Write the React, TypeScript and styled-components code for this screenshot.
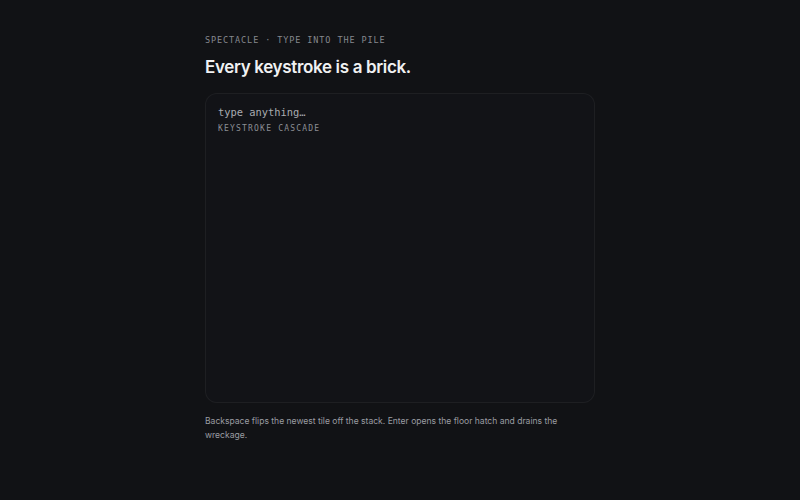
import React from "react";
import styled, { createGlobalStyle } from "styled-components";

const Global = createGlobalStyle`
  html, body { margin: 0; padding: 0; background: #111215; }
  body { font-family: Inter, "Noto Sans", sans-serif; color: #e8e9ea; }
`;

const Page = styled.main`
  width: 390px;
  margin: 0 auto;
  padding-top: 34px;
  display: flex;
  flex-direction: column;
`;

const Eyebrow = styled.div`
  font-family: "DejaVu Sans Mono", "Liberation Mono", monospace;
  font-size: 8.5px;
  letter-spacing: 0.9px;
  color: #85888e;
  text-transform: uppercase;
  line-height: 12px;
`;

const Title = styled.h1`
  margin: 10px 0 0;
  font-size: 17px;
  font-weight: 600;
  letter-spacing: -0.02em;
  color: #f0f1f2;
  line-height: 22px;
`;

const Stage = styled.section`
  margin-top: 15px;
  height: 310px;
  box-sizing: border-box;
  border: 1px solid rgba(255, 255, 255, 0.05);
  border-radius: 12px;
  background: #121317;
  padding: 11px 12px;
  display: flex;
  flex-direction: column;
  gap: 4px;
`;

const Prompt = styled.div`
  font-family: "DejaVu Sans Mono", "Liberation Mono", monospace;
  font-size: 10.4px;
  color: #a9abb0;
  line-height: 14px;
`;

const Tag = styled.div`
  font-family: "DejaVu Sans Mono", "Liberation Mono", monospace;
  font-size: 8px;
  letter-spacing: 1.2px;
  color: #8b8e94;
  line-height: 12px;
`;

const Note = styled.p`
  margin: 11px 0 0;
  font-size: 8.55px;
  line-height: 14px;
  color: #9a9ca2;
`;

export default function App() {
  return (
    <>
      <Global />
      <Page>
        <Eyebrow>Spectacle · Type into the pile</Eyebrow>
        <Title>Every keystroke is a brick.</Title>
        <Stage>
          <Prompt>type anything…</Prompt>
          <Tag>KEYSTROKE CASCADE</Tag>
        </Stage>
        <Note>
          Backspace flips the newest tile off the stack. Enter opens the floor hatch and drains the wreckage.
        </Note>
      </Page>
    </>
  );
}
